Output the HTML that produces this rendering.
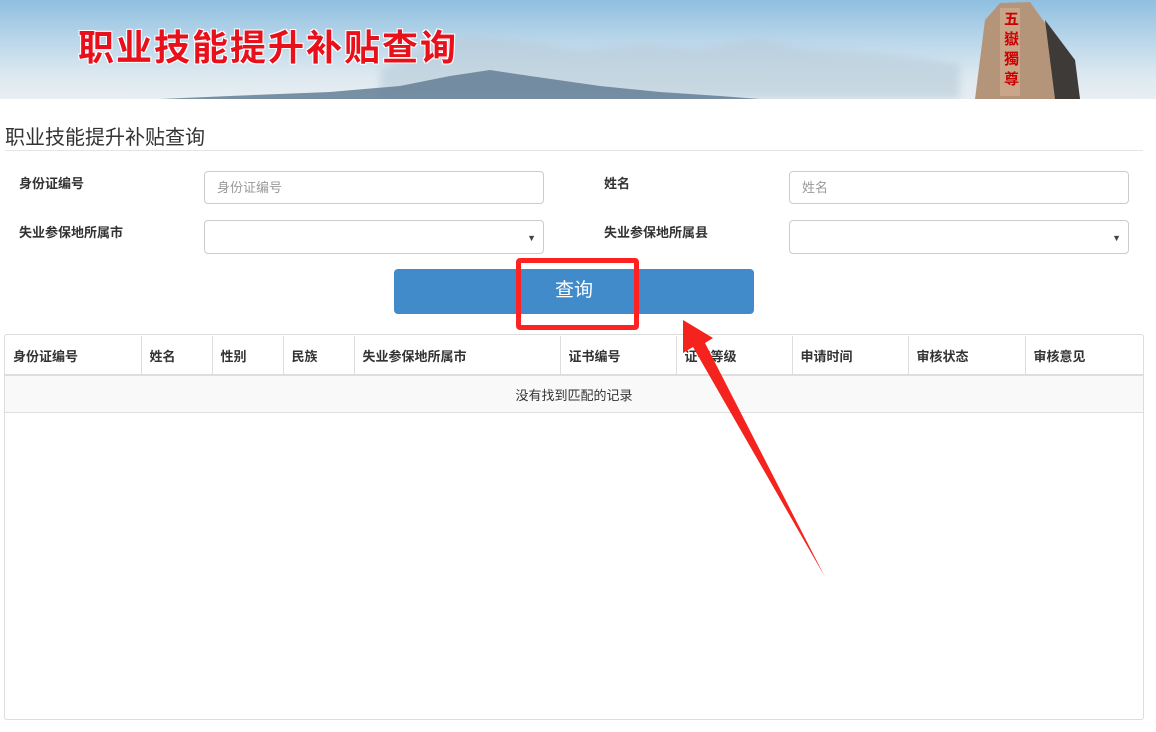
<!DOCTYPE html>
<html><head><meta charset="utf-8"><style>
body{margin:0;width:1156px;height:732px;background:#fff;font-family:"Liberation Sans","Noto Sans CJK SC",sans-serif;position:relative;overflow:hidden;color:#333}
.ab{position:absolute}
.banner{left:0;top:0;width:1156px;height:99px;background:linear-gradient(180deg,#8fbfe0 0%,#b9d6ea 40%,#dce8f0 75%,#e8eef2 100%)}
.lbl{font-size:13px;font-weight:bold;color:#333}
.inp{height:32px;border:1px solid #ccc;border-radius:4px;background:#fff;font-size:13px;color:#999;line-height:32px;padding-left:12px;box-sizing:border-box}
table{border-collapse:collapse;font-size:13px;table-layout:fixed}
th{font-weight:bold;text-align:left;padding:0 0 0 8px;border-left:1px solid #ddd;height:39px;border-bottom:2px solid #ddd;box-sizing:border-box}
th:first-child{border-left:none}
</style></head><body>
<div class="ab banner"></div>
<svg class="ab" style="left:0;top:0" width="1156" height="99">
<defs><filter id="b"><feGaussianBlur stdDeviation="4"/></filter></defs>
<path d="M380 70 L430 45 L470 35 L520 40 L580 50 L640 44 L700 48 L760 38 L800 48 L860 52 L920 58 L960 64 L960 99 L380 99Z" fill="#b7cbd8" opacity=".6" filter="url(#b)"/>
<path d="M160 99 L230 96 L330 92 L400 86 L450 76 L490 70 L530 76 L600 86 L660 92 L720 96 L760 99Z" fill="#647f95" opacity=".85"/>
<path d="M975 99 L985 20 L1000 3 L1030 2 L1050 30 L1075 60 L1080 99Z" fill="#b5957a"/>
<path d="M1045 20 L1075 60 L1080 99 L1055 99Z" fill="#3d3a38"/>
<rect x="1000" y="8" width="20" height="88" fill="#c9a589"/>
</svg>
<div class="ab" style="left:78px;top:19px;font-size:36px;font-weight:bold;color:#e8101a;letter-spacing:2px;text-shadow:1px 1px 0 #fff,-1px -1px 0 #fff,1px -1px 0 #fff,-1px 1px 0 #fff">职业技能提升补贴查询</div>
<div class="ab" style="left:1004px;top:10px;width:16px;font-size:15px;line-height:20px;color:#c00;font-weight:bold">五嶽獨尊</div>
<div class="ab" style="left:5px;top:121px;font-size:20px;color:#333">职业技能提升补贴查询</div>
<div class="ab" style="left:5px;top:150px;width:1138px;height:1px;background:#e5e5e5"></div>
<div class="ab lbl" style="left:19px;top:173px">身份证编号</div>
<div class="ab inp" style="left:204px;top:171px;width:340px;height:33px">身份证编号</div>
<div class="ab lbl" style="left:604px;top:173px">姓名</div>
<div class="ab inp" style="left:789px;top:171px;width:340px;height:33px">姓名</div>
<div class="ab lbl" style="left:19px;top:222px">失业参保地所属市</div>
<div class="ab inp" style="left:204px;top:220px;width:340px;height:34px"><span style="position:absolute;right:7px;top:1px;font-size:9px;color:#444">▼</span></div>
<div class="ab lbl" style="left:604px;top:222px">失业参保地所属县</div>
<div class="ab inp" style="left:789px;top:220px;width:340px;height:34px"><span style="position:absolute;right:7px;top:1px;font-size:9px;color:#444">▼</span></div>
<div class="ab" style="left:394px;top:269px;width:360px;height:45px;background:#428bca;border-radius:4px;color:#fff;font-size:19px;text-align:center;line-height:44px">查询</div>
<div class="ab" style="left:516px;top:258px;width:113px;height:62px;border:5px solid #f22;border-radius:4px"></div>
<div class="ab" style="left:4px;top:334px;width:1138px;height:384px;border:1px solid #ddd;border-radius:3px"></div>
<table class="ab" style="left:5px;top:336px;width:1138px">
<colgroup><col style="width:136px"><col style="width:71px"><col style="width:71px"><col style="width:71px"><col style="width:206px"><col style="width:116px"><col style="width:116px"><col style="width:116px"><col style="width:117px"><col style="width:118px"></colgroup>
<tr><th>身份证编号</th><th>姓名</th><th>性别</th><th>民族</th><th>失业参保地所属市</th><th>证书编号</th><th>证书等级</th><th>申请时间</th><th>审核状态</th><th>审核意见</th></tr>
<tr><td colspan="10" style="text-align:center;height:36px;padding:0;background:#f9f9f9;border-bottom:1px solid #ddd">没有找到匹配的记录</td></tr>
</table>
<svg class="ab" style="left:0;top:0" width="1156" height="732">
<path d="M683 320 L683 353 L693 347 L825 577 L705 343 L713 338Z" fill="#f4231d"/>
</svg>
</body></html>
